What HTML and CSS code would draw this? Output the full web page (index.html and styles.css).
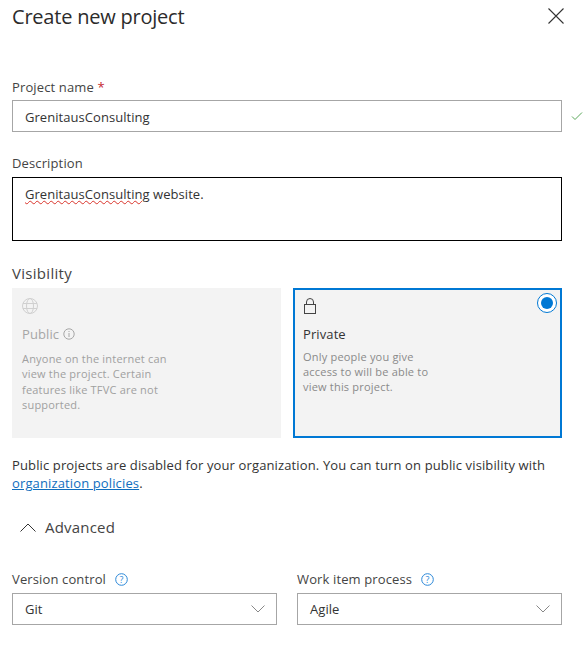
FILE: index.html
```html
<!DOCTYPE html>
<html lang="en">
<head>
    <meta charset="UTF-8">
    <title>Create new project</title>
    <link rel="stylesheet" href="styles.css">
</head>
<body>
    <div class="dialog">
        <div class="header">
            <h1>Create new project</h1>
            <svg class="close" width="16" height="16" viewBox="0 0 16 16"><path d="M.5.5l15 15M15.500.5l-15 15" fill="none" stroke="#333" stroke-width="1.100"/></svg>
        </div>

        <div class="field-name">
            <label class="label">Project name <span class="req">*</span></label>
            <div class="name-row">
                <div class="input">GrenitausConsulting</div>
                <svg class="check" width="12" height="10" viewBox="0 0 12 10"><path d="M1 5.500l3 3L11 1.500" fill="none" stroke="#5aa85a" stroke-width="1"/></svg>
            </div>
        </div>

        <div class="field-desc">
            <label class="label">Description</label>
            <div class="textarea"><span class="misspelled">GrenitausConsulting</span> website.</div>
        </div>

        <div class="visibility-title">Visibility</div>
        <div class="cards">
            <div class="card disabled">
                <svg class="card-icon" width="16" height="16" viewBox="0 0 16 16" fill="none" stroke="#d0d0d0"><circle cx="8" cy="8" r="7.500"/><ellipse cx="8" cy="8" rx="3.500" ry="7.500"/><path d="M1 5.500h14M1 10.500h14"/></svg>
                <div class="card-title">Public
                    <svg width="12" height="12" viewBox="0 0 12 12" fill="none" stroke="#a6a6a6"><circle cx="6" cy="6" r="5.200"/><path d="M6 5v4M6 3v1"/></svg>
                </div>
                <p class="card-text">Anyone on the internet can view the project. Certain features like TFVC are not supported.</p>
            </div>
            <div class="card selected">
                <svg class="card-icon" width="14" height="16" viewBox="0 0 14 16" fill="none" stroke="#444"><rect x="1.500" y="6.500" width="11" height="9"/><path d="M3.500 6.500V4a3.500 3.500 0 0 1 7 0v2.500"/></svg>
                <div class="card-title">Private</div>
                <p class="card-text">Only people you give access to will be able to view this project.</p>
                <span class="radio"><span class="radio-dot"></span></span>
            </div>
        </div>

        <p class="notice">Public projects are disabled for your organization. You can turn on public visibility with <a href="#">organization policies</a>.</p>

        <div class="advanced">
            <svg width="16" height="9" viewBox="0 0 16 9"><path d="M.5 8.500L8 1l7.500 7.500" fill="none" stroke="#333" stroke-width="1"/></svg>
            <span>Advanced</span>
        </div>

        <div class="selects">
            <div class="select-field">
                <div class="label help-label">Version control
                    <svg class="help" width="13" height="13" viewBox="0 0 13 13"><circle cx="6.500" cy="6.500" r="5.800" fill="none" stroke="#2b88d8"/><text x="6.500" y="9.800" text-anchor="middle">?</text></svg>
                </div>
                <div class="select">Git
                    <svg width="14" height="8" viewBox="0 0 14 8"><path d="M.5.500L7 7l6.500-6.500" fill="none" stroke="#888"/></svg>
                </div>
            </div>
            <div class="select-field">
                <div class="label help-label">Work item process
                    <svg class="help" width="13" height="13" viewBox="0 0 13 13"><circle cx="6.500" cy="6.500" r="5.800" fill="none" stroke="#2b88d8"/><text x="6.500" y="9.800" text-anchor="middle">?</text></svg>
                </div>
                <div class="select">Agile
                    <svg width="14" height="8" viewBox="0 0 14 8"><path d="M.5.500L7 7l6.500-6.500" fill="none" stroke="#888"/></svg>
                </div>
            </div>
        </div>
    </div>
</body>
</html>
```

FILE: styles.css
```css
* {
    margin: 0;
    padding: 0;
    box-sizing: border-box;
}

body {
    font-family: "Open Sans", "Noto Sans", sans-serif;
    font-size: 13px;
    color: #333;
    background-color: #fff;
}

.dialog {
    width: 585px;
    height: 646px;
    overflow: hidden;
    padding: 0 23px 0 12px;
}

.header {
    display: flex;
    justify-content: space-between;
    align-items: center;
    height: 34px;
    margin-right: -15px;
    padding-right: 13px;
}

.header h1 {
    font-size: 20px;
    font-weight: 400;
    line-height: 34px;
    letter-spacing: -0.22px;
    color: #2b2b2b;
}

.close {
    margin-bottom: 3px;
}

.label {
    display: block;
    height: 20px;
    line-height: 20px;
    letter-spacing: 0.13px;
    color: #444;
}

.req {
    color: #c4262e;
}

.field-name {
    margin-top: 43px;
}

.name-row {
    position: relative;
    margin-top: 3px;
}

.input {
    height: 32px;
    line-height: 32px;
    padding-left: 12px;
    border: 1px solid #a6a6a6;
    letter-spacing: 0.05px;
}

.check {
    position: absolute;
    left: 559px;
    top: 11px;
}

.field-desc {
    margin-top: 21px;
}

.textarea {
    height: 64px;
    margin-top: 4px;
    padding: 6px 12px;
    line-height: 20px;
    border: 1px solid #000;
    letter-spacing: 0.05px;
}

.misspelled {
    text-decoration: underline wavy #d9342b 1px;
    text-underline-offset: 1px;
}

.visibility-title {
    margin-top: 21px;
    height: 22px;
    line-height: 22px;
    font-size: 15px;
    letter-spacing: 0.3px;
    color: #444;
}

.cards {
    display: grid;
    grid-template-columns: 269px 269px;
    gap: 12px;
    margin-top: 4px;
}

.card {
    position: relative;
    height: 150px;
    padding: 10px;
    background-color: #f3f3f3;
}

.card-icon {
    display: block;
}

.card-title {
    display: flex;
    align-items: center;
    gap: 4px;
    margin-top: 11px;
    line-height: 18px;
    font-size: 13px;
    letter-spacing: 0.1px;
}

.card-text {
    width: 155px;
    margin-top: 6px;
    font-size: 11px;
    line-height: 15px;
    letter-spacing: 0.2px;
    color: #8a8a8a;
}

.disabled .card-title {
    color: #a6a6a6;
}

.disabled .card-text {
    margin-top: 8px;
    line-height: 15.300px;
    color: #a0a0a0;
}

.selected {
    border: 2px solid #0078d4;
    padding: 8px;
}

.selected .card-text {
    width: 132px;
}

.radio {
    position: absolute;
    top: 3px;
    right: 3px;
    width: 20px;
    height: 20px;
    display: flex;
    align-items: center;
    justify-content: center;
    border: 1px solid #0078d4;
    border-radius: 50%;
    background-color: #fff;
}

.radio-dot {
    width: 12px;
    height: 12px;
    border-radius: 50%;
    background-color: #0078d4;
}

.notice {
    margin-top: 18px;
    line-height: 18px;
    letter-spacing: 0.13px;
    color: #333;
}

.notice a {
    color: #106ebe;
}

.advanced {
    display: flex;
    align-items: center;
    gap: 9px;
    height: 22px;
    margin-top: 24px;
    padding-left: 8px;
    font-size: 15px;
    letter-spacing: 0.2px;
    color: #444;
}

.selects {
    display: grid;
    grid-template-columns: 265px 265px;
    gap: 20px;
    margin-top: 31px;
}

.help-label {
    display: flex;
    align-items: center;
    gap: 9px;
}

.help text {
    font-size: 9px;
    fill: #2b88d8;
}

.select {
    display: flex;
    justify-content: space-between;
    align-items: center;
    height: 32px;
    margin-top: 4px;
    padding: 0 11px 0 12px;
    border: 1px solid #a6a6a6;
    letter-spacing: 0.05px;
}
```
